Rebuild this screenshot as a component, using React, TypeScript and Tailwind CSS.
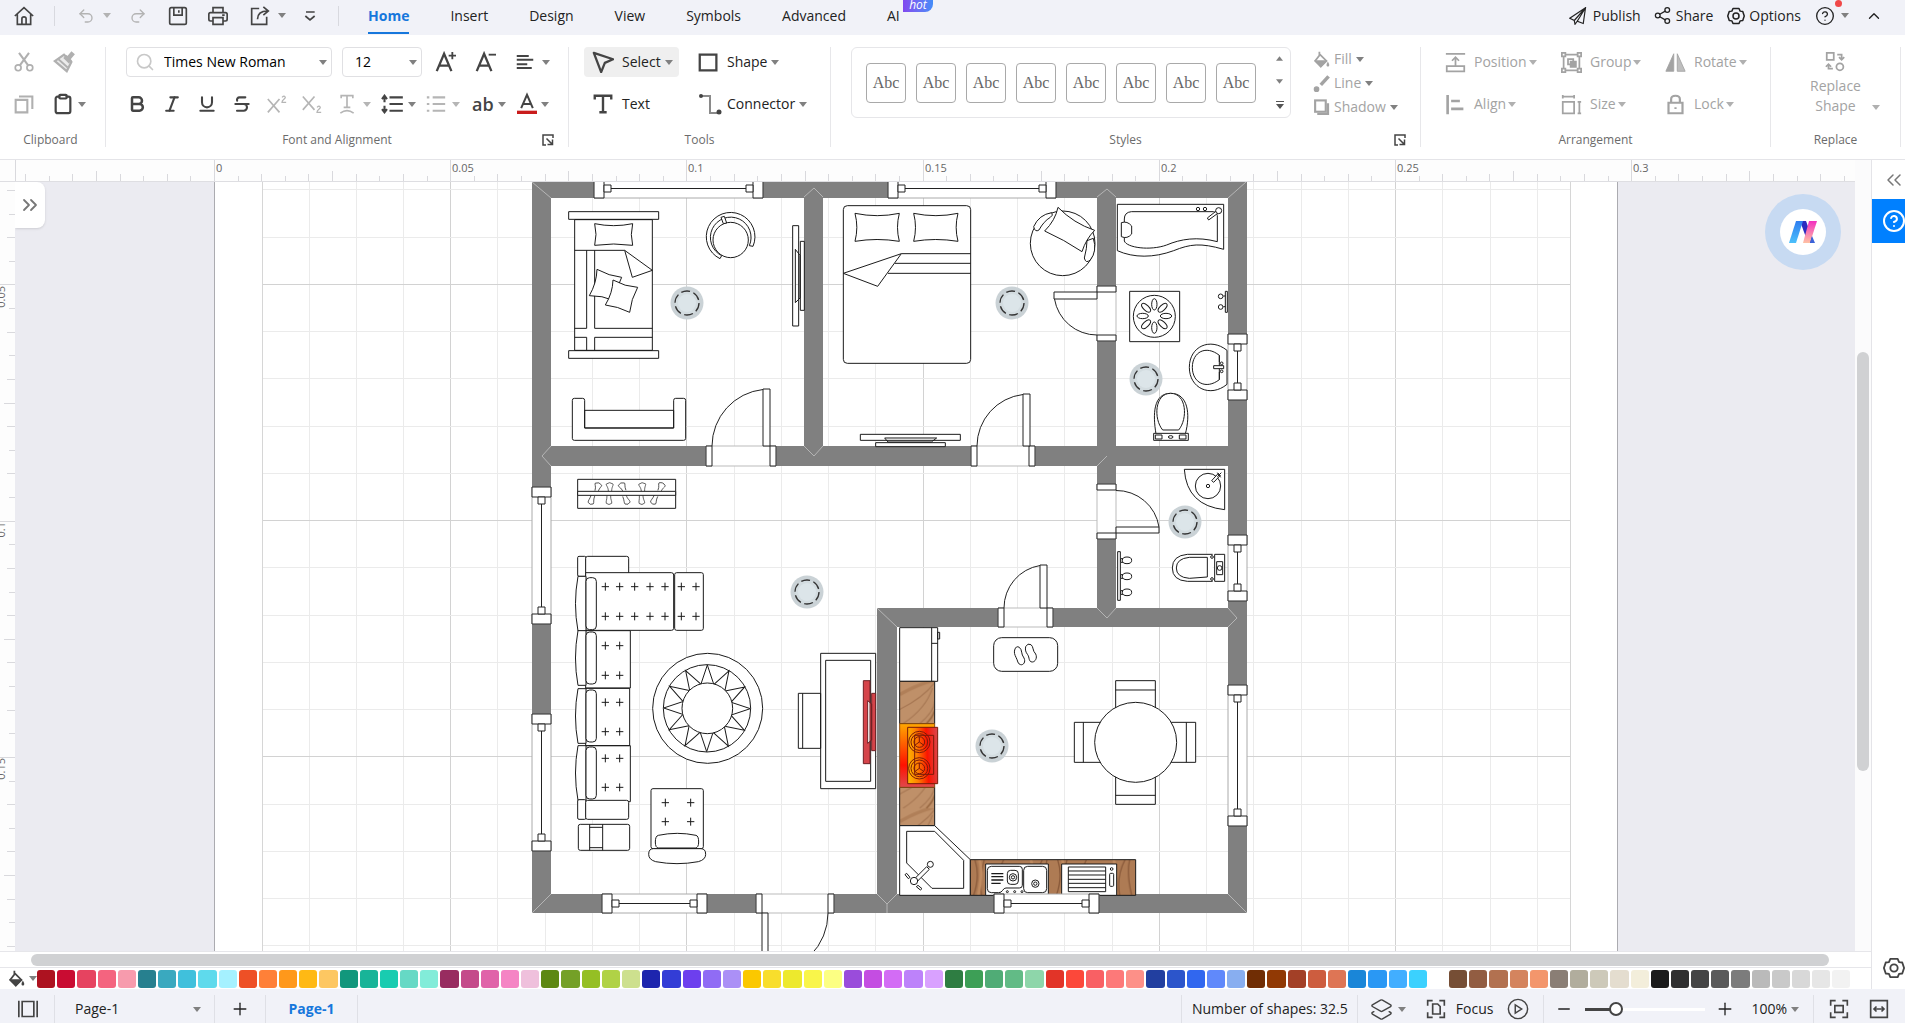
import type { ReactNode } from "react";
import {
  Bold,
  ChevronUp,
  ChevronsLeft,
  ChevronsRight,
  CircleHelp,
  Clipboard,
  Italic,
  Layers2,
  Minus,
  Plus,
  Redo2,
  Search,
  Share2,
  Strikethrough,
  Underline,
  Undo2,
} from "lucide-react";

const tabs = ["Home", "Insert", "Design", "View", "Symbols", "Advanced", "AI"];

const swatches = [
  "#ad1220", "#c90c32", "#e64360", "#f4647f", "#f79bad",
  "#27808f", "#3aa9bf", "#40c0dc", "#5fdaec", "#a5f1ff",
  "#ee5026", "#ff8038", "#ff981b", "#ffb914", "#fdc762",
  "#12977c", "#18b498", "#19ccb0", "#66d9c5", "#82ecd9",
  "#982c60", "#c44a8a", "#e063a9", "#f584c4", "#efc0dc",
  "#5d8812", "#74a027", "#95bf24", "#b0d246", "#cde08e",
  "#1d25ae", "#333dd6", "#6d3fee", "#906cf5", "#ab90f6",
  "#fbc800", "#f8de2c", "#ede92d", "#f9f54a", "#fcff83",
  "#9a4cdb", "#c44de2", "#d36cf5", "#bd82fa", "#d9a1ff",
  "#2e7d42", "#3d9f56", "#50ac76", "#62bb86", "#8ed6aa",
  "#e23428", "#fc483a", "#f96064", "#fd7979", "#fd9088",
  "#223fa0", "#2c55cb", "#3167ef", "#6089fb", "#88aef0",
  "#702d04", "#913904", "#a34027", "#cd5d3f", "#de7555",
  "#1a86d8", "#2a98f4", "#42aeff", "#3bd1fe", "#ffffff",
  "#764e35", "#925d42", "#b27150", "#d4845e", "#f3966c",
  "#8a7e75", "#b1ad9d", "#cdc9b9", "#e4ddcf", "#f3eedb",
  "#1a1a1a", "#303030", "#454545", "#5a5a5a", "#7c7c7c",
  "#bababa", "#c9c9c9", "#d8d8d8", "#e6e6e6", "#f2f2f2", "#ffffff",
];

function Caret({ className = "" }: { className?: string }) {
  return (
    <svg viewBox="0 0 8 5" className={`h-[5px] w-2 shrink-0 fill-[#808080] ${className}`}>
      <path d="M0 0h8L4 5z" />
    </svg>
  );
}

function Icon({ children, className = "size-5" }: { children: ReactNode; className?: string }) {
  return (
    <svg
      viewBox="0 0 24 24"
      fill="none"
      stroke="currentColor"
      strokeWidth="2"
      className={`shrink-0 ${className}`}
    >
      {children}
    </svg>
  );
}

const BucketIcon = ({ className = "size-5" }: { className?: string }) => (
  <Icon className={className}>
    <path d="M9 1v6M10 5l9 9-8 8-8-8z" strokeWidth="2.500" />
    <path d="M4 14h14l-7 8z" fill="currentColor" />
    <path d="M21 15c3 4 2 7 0 7s-3-3 0-7z" fill="currentColor" stroke="none" />
  </Icon>
);

const GearIcon = ({ className = "size-5" }: { className?: string }) => (
  <Icon className={className}>
    <path d="M8 2h8l1.500 3.500L21 6l2 6-2 6-3.500.500L16 22H8l-1.500-3.500L3 18l-2-6 2-6 3.500-.500z" strokeLinejoin="round" />
    <circle cx="12" cy="12" r="4" />
  </Icon>
);

const LaunchIcon = () => (
  <Icon className="size-3">
    <path d="M8 22H2V2h20v6M9 9l11 11M21 11v10H11" strokeWidth="3" />
  </Icon>
);

function Divider() {
  return <div className="my-3 w-px shrink-0 bg-[#e7e7ea]" />;
}

function Group({
  label,
  className,
  bodyClassName = "",
  launcher,
  children,
}: {
  label: string;
  className: string;
  bodyClassName?: string;
  launcher?: boolean;
  children: ReactNode;
}) {
  return (
    <section className={`flex shrink-0 flex-col pt-1.5 ${className}`}>
      <div className={`h-[84px] ${bodyClassName}`}>{children}</div>
      <div className="relative flex h-[30px] items-center justify-center text-xs text-[#6b6b6b]">
        {label}
        {launcher && (
          <button aria-label={`${label} settings`} className="absolute right-3.5 text-[#444]">
            <LaunchIcon />
          </button>
        )}
      </div>
    </section>
  );
}

function Tool({
  icon,
  label,
  caret = true,
  className = "",
}: {
  icon: ReactNode;
  label: string;
  caret?: boolean;
  className?: string;
}) {
  return (
    <button className={`flex items-center text-sm whitespace-nowrap ${className}`}>
      {icon}
      {label}
      {caret && <Caret className="ml-1" />}
    </button>
  );
}

function TopBar() {
  return (
    <header className="flex h-[35px] items-stretch bg-[#f1f2f8] text-sm text-[#222]">
      <div className="flex items-center text-[#444]">
        <button aria-label="Start page" className="flex w-12 justify-center pb-1">
          <Icon>
            <path d="M1 12 12 2l11 10M4 10v12h16V10M9.500 22v-7q0-2 2.500-2t2.500 2v7" />
          </Icon>
        </button>
        <div className="mb-1 ml-1.5 h-5 w-px bg-[#d8d9df]" />
        <button aria-label="Undo" className="mb-1 ml-[22px] flex items-center gap-2 text-[#b3b3b3]">
          <Undo2 size={18} strokeWidth={1.8} />
          <Caret className="fill-[#b3b3b3]" />
        </button>
        <button aria-label="Redo" className="mb-1 ml-[18px] text-[#b3b3b3]">
          <Redo2 size={18} strokeWidth={1.8} />
        </button>
        <button aria-label="Save" className="mb-1 ml-[21px]">
          <Icon>
            <rect x="2" y="2" width="20" height="20" rx="2" />
            <path d="M7 2v9h10V2M13 5v3" />
          </Icon>
        </button>
        <button aria-label="Print" className="mb-1 ml-5">
          <Icon>
            <path d="M6 8V2h12v6M6 18H3q-2 0-2-2v-6q0-2 2-2h18q2 0 2 2v6q0 2-2 2h-3M6 14h12v8H6zM17 11h3" />
          </Icon>
        </button>
        <button aria-label="Export" className="mb-1 ml-[22px] flex items-center gap-2">
          <Icon>
            <path d="M11 3H2v19h18v-9M9 16c0-7 4-10 12-10M16 1l6 5-6 5" />
          </Icon>
          <Caret />
        </button>
        <button aria-label="Customize toolbar" className="mb-1 ml-4">
          <Icon className="size-4">
            <path d="M6 6h13M5 12l7 6 7-6" strokeWidth="2.500" />
          </Icon>
        </button>
        <div className="mb-1 ml-5 h-5 w-px bg-[#d8d9df]" />
      </div>
      <nav className="ml-[29px] flex gap-[41px]">
        {tabs.map((tab) => (
          <button
            key={tab}
            className={
              tab === "Home"
                ? "relative pb-1 font-bold text-[#1677dc] after:absolute after:inset-x-0 after:bottom-px after:h-0.5 after:bg-[#1677dc]"
                : "relative pb-1"
            }
          >
            {tab}
            {tab === "AI" && (
              <span className="absolute top-0 left-4 h-3 w-[30px] rounded-b-lg rounded-bl-none bg-linear-to-r from-[#8048ef] to-[#418cf8] text-center text-xs leading-[10px] text-white italic">
                hot
              </span>
            )}
          </button>
        ))}
      </nav>
      <div className="ml-auto flex items-center pr-[22px] pb-1">
        <button className="flex items-center gap-1.5">
          <Icon className="size-[18px]">
            <path d="M22 1 1 15l6 3 1 5 3-4 8 3zM7 18 22 1 11 19" strokeWidth="1.600" />
          </Icon>
          Publish
        </button>
        <button className="ml-3 flex items-center gap-1">
          <Share2 size={19} strokeWidth={1.6} />
          Share
        </button>
        <button className="ml-3.5 flex items-center gap-1">
          <GearIcon className="size-[18px]" />
          Options
        </button>
        <button aria-label="Help" className="relative ml-3.5 flex items-center gap-1.5">
          <CircleHelp size={20} strokeWidth={1.6} />
          <span className="absolute -top-1.5 left-5 size-[7px] rounded-full bg-[#f04848]" />
          <Caret />
        </button>
        <button aria-label="Collapse ribbon" className="ml-4">
          <ChevronUp size={18} strokeWidth={1.8} />
        </button>
      </div>
    </header>
  );
}

function ClipboardGroup() {
  return (
    <Group label="Clipboard" className="w-[105px] pr-1">
      <div className="grid grid-cols-[48px_44px] text-[#b0b0b0]">
        <button aria-label="Cut" className="flex h-[42px] items-center justify-center">
          <Icon>
            <circle cx="5" cy="19" r="3.500" />
            <circle cx="19" cy="19" r="3.500" />
            <path d="M7 16 18 1M17 16 6 1" strokeWidth="2.500" />
          </Icon>
        </button>
        <button aria-label="Format painter" className="flex h-[42px] items-center pl-[5px]">
          <Icon className="size-[22px]">
            <path d="M2 11 12 4l8 8-5 10z" fill="currentColor" fillOpacity=".25" strokeWidth="2.500" />
            <path d="M13 6 19 12M16 9l6-7" strokeWidth="5" />
            <path d="M6 9l10 9" />
          </Icon>
        </button>
        <button aria-label="Copy" className="flex h-[42px] items-center justify-center">
          <Icon>
            <path d="M2 7h14v15H2zM6 3h16v15" strokeWidth="2.500" />
          </Icon>
        </button>
        <button aria-label="Paste" className="flex h-[42px] items-center gap-1 pl-1 text-[#444]">
          <Clipboard size={22} strokeWidth={2.4} className="shrink-0" />
          <Caret />
        </button>
      </div>
    </Group>
  );
}

function FontGroup() {
  return (
    <Group label="Font and Alignment" className="w-[462px]" bodyClassName="pl-5" launcher>
      <div className="flex h-[42px] items-center text-[#444]">
        <div className="flex h-[30px] w-[206px] items-center rounded border border-[#e0e0e3] px-2">
          <Search size={20} strokeWidth={2} className="shrink-0 text-[#c8c8c8]" />
          <select aria-label="Font" className="ml-[9px] w-full appearance-none text-sm text-black outline-none">
            <option>Times New Roman</option>
          </select>
          <Caret className="-mr-1" />
        </div>
        <div className="ml-2.5 flex h-[30px] w-20 items-center rounded border border-[#e0e0e3] pr-1 pl-3">
          <select aria-label="Font size" className="w-full appearance-none text-sm text-black outline-none">
            <option>12</option>
          </select>
          <Caret />
        </div>
        <button aria-label="Increase font size" className="ml-3">
          <Icon className="size-[22px]">
            <path d="M3 22 11 3l8 19M6 16h10" strokeWidth="2.500" />
            <path d="M16 5h8M20 1v8" />
          </Icon>
        </button>
        <button aria-label="Decrease font size" className="ml-[18px]">
          <Icon className="size-[22px]">
            <path d="M3 22 11 3l8 19M6 16h10" strokeWidth="2.500" />
            <path d="M16 4h8" />
          </Icon>
        </button>
        <button aria-label="Align text" className="ml-5 flex items-center gap-2">
          <Icon className="size-[18px]">
            <path d="M1 4h16M1 9h22M1 15h14M1 20h20" strokeWidth="2.800" />
          </Icon>
          <Caret />
        </button>
      </div>
      <div className="flex h-[42px] items-center pl-px text-[#444] [&>button]:flex [&>button]:shrink-0 [&>button]:items-center">
        <button aria-label="Bold" className="w-[35px]">
          <Bold size={20} strokeWidth={3} />
        </button>
        <button aria-label="Italic" className="w-[35px]">
          <Italic size={20} strokeWidth={2.5} />
        </button>
        <button aria-label="Underline" className="w-[35px]">
          <Underline size={20} strokeWidth={2.5} />
        </button>
        <button aria-label="Strikethrough" className="w-[35px]">
          <Strikethrough size={20} strokeWidth={2.5} />
        </button>
        <button aria-label="Superscript" className="w-[35px] text-[#b5b5b5]">
          <Icon>
            <path d="M1 6 15 22M15 6 1 22" />
            <path d="M18 4q3-3 4 0c0 2-4 3-4 6h5" strokeWidth="1.500" />
          </Icon>
        </button>
        <button aria-label="Subscript" className="w-[35px] text-[#b5b5b5]">
          <Icon>
            <path d="M1 3 15 19M15 3 1 19" />
            <path d="M18 16q3-3 4 0c0 2-4 3-4 6h5" strokeWidth="1.500" />
          </Icon>
        </button>
        <button aria-label="Text curve" className="w-[43px] gap-1.5 text-[#b5b5b5]">
          <Icon>
            <path d="M5 5V2h14v3M12 2v14M8 16h8M4 23q8-6 16 0" />
          </Icon>
          <Caret className="fill-[#b5b5b5]" />
        </button>
        <button aria-label="Line spacing" className="w-[46px] gap-1">
          <Icon className="h-5 w-6">
            <path d="M3 3v7M3 14v7M0 6l3-4 3 4M0 18l3 4 3-4M9 4h16M9 12h16M9 20h16" strokeWidth="2.500" />
          </Icon>
          <Caret />
        </button>
        <button aria-label="Bullets" className="w-[46px] gap-1.5 text-[#b5b5b5]">
          <Icon>
            <path d="M1 4h3M1 12h3M1 20h3M8 4h15M8 12h15M8 20h15" strokeWidth="2.500" />
          </Icon>
          <Caret className="fill-[#b5b5b5]" />
        </button>
        <button className="w-[45px] gap-1 text-lg leading-5 font-semibold" aria-label="Text case">
          ab
          <Caret />
        </button>
        <button aria-label="Font color" className="gap-1">
          <Icon className="h-6 w-5">
            <path d="M5 17 12 1l7 16M8 12h8" strokeWidth="2.400" />
            <path d="M0 22h24" stroke="#c91c1c" strokeWidth="4" />
          </Icon>
          <Caret />
        </button>
      </div>
    </Group>
  );
}

function ToolsGroup() {
  return (
    <Group label="Tools" className="w-[261px]" bodyClassName="pl-[15px]">
      <div className="grid grid-cols-[114px_1fr] text-[#222] [&_svg]:text-[#444]">
        <div className="flex h-[42px] items-center">
          <Tool
            label="Select"
            className="h-[30px] w-[95px] rounded bg-[#efefef] pl-2"
            icon={
              <Icon className="mr-2 size-[22px]">
                <path d="M2 2l21 7-9 4-4 10z" strokeWidth="2.500" strokeLinejoin="round" />
              </Icon>
            }
          />
        </div>
        <Tool
          label="Shape"
          className="h-[42px]"
          icon={
            <Icon className="mr-2 size-[21px]">
              <rect x="2" y="3" width="19" height="18" strokeWidth="2.600" />
            </Icon>
          }
        />
        <Tool
          label="Text"
          caret={false}
          className="h-[42px] pl-2"
          icon={
            <Icon className="mr-2 size-[22px]">
              <path d="M3 7V3h18v4M12 3v18M8 21h8" strokeWidth="2.600" />
            </Icon>
          }
        />
        <Tool
          label="Connector"
          className="h-[42px]"
          icon={
            <Icon className="mr-[5px] size-6">
              <path d="M3 4h9v17h9" stroke="#8a8a8a" />
              <circle cx="3" cy="4" r="2" fill="currentColor" stroke="none" />
              <circle cx="21" cy="20" r="2.500" fill="currentColor" stroke="none" />
            </Icon>
          }
        />
      </div>
    </Group>
  );
}

function StylesGroup() {
  return (
    <Group label="Styles" className="min-w-0 flex-1" bodyClassName="pl-5" launcher>
      <div className="flex pt-1.5">
        <div className="flex h-[71px] w-[440px] items-center gap-2.5 rounded-md border border-[#e6e6e9] pl-3.5">
          {Array.from({ length: 8 }, (_, i) => (
            <button
              key={i}
              className="h-10 w-10 shrink-0 rounded border border-[#a9a9a9] font-['Liberation_Serif',serif] text-base text-[#666]"
            >
              Abc
            </button>
          ))}
          <div className="ml-2.5 flex h-full flex-col justify-between py-2">
            <button aria-label="Previous styles">
              <Caret className="h-1 w-[7px] rotate-180 fill-[#555]" />
            </button>
            <button aria-label="Next styles">
              <Caret className="h-1 w-[7px] fill-[#555]" />
            </button>
            <button aria-label="More styles">
              <svg viewBox="0 0 8 8" className="size-2 fill-[#555]">
                <path d="M0 0h8v1H0zM0 3h8L4 8z" />
              </svg>
            </button>
          </div>
        </div>
        <div className="ml-[22px] flex flex-col text-[#a3a3a3]">
          <Tool label="Fill" className="h-6" icon={<BucketIcon className="mr-1 size-[17px]" />} />
          <Tool
            label="Line"
            className="h-6"
            icon={
              <Icon className="mr-1 size-[17px]">
                <path d="M22 2 11 14" strokeWidth="5" />
                <circle cx="5" cy="20" r="3" fill="currentColor" />
              </Icon>
            }
          />
          <Tool
            label="Shadow"
            className="h-6"
            icon={
              <Icon className="mr-1 size-[17px]">
                <rect x="3" y="2" width="15" height="16" strokeWidth="3" />
                <path d="M21 6v15H6" strokeWidth="3.500" />
              </Icon>
            }
          />
        </div>
      </div>
    </Group>
  );
}

const arrangement = [
  {
    label: "Position",
    icon: <path d="M1 2h22M12 7v8M8 10l4-4 4 4M2 16h20v6H2z" />,
  },
  {
    label: "Group",
    icon: (
      <>
        <path d="M3 3h18v18H3zM8 8h6v6H8z" />
        <path d="M11 11h6v6h-6z" fill="currentColor" />
        <path d="M1 1h4v4H1zM19 1h4v4h-4zM1 19h4v4H1zM19 19h4v4h-4z" fill="#fff" />
      </>
    ),
  },
  {
    label: "Rotate",
    icon: (
      <>
        <path d="M10 2v20H1z" fill="currentColor" strokeWidth="1" />
        <path d="M14 2v20h9z" fill="currentColor" fillOpacity=".7" strokeWidth="1" />
      </>
    ),
  },
  {
    label: "Align",
    icon: <path d="M3 1v22M7 8h10M7 17h14" strokeWidth="3" />,
  },
  {
    label: "Size",
    icon: <path d="M2 9h13v13H2zM1 3h15M2 1v4M15 1v4M21 9v13M19 9h4M19 22h4" />,
  },
  {
    label: "Lock",
    icon: <path d="M4 10h16v12H4zM7 10V6q0-4 5-4t5 4v4M12 15v2" strokeWidth="2.500" />,
  },
];

function Ribbon() {
  return (
    <div className="flex h-[125px] border-b border-[#e4e4e8] bg-white">
      <ClipboardGroup />
      <Divider />
      <FontGroup />
      <Divider />
      <ToolsGroup />
      <Divider />
      <StylesGroup />
      <Divider />
      <Group label="Arrangement" className="w-[349px]">
        <div className="grid grid-cols-[116px_104px_1fr] pl-6 text-[#a3a3a3]">
          {arrangement.map((item) => (
            <Tool
              key={item.label}
              label={item.label}
              className="h-[42px] [&>svg:last-child]:ml-0.5 [&>svg:last-child]:fill-[#b0b0b0]"
              icon={<Icon className="mr-2 size-[21px]">{item.icon}</Icon>}
            />
          ))}
        </div>
      </Group>
      <Divider />
      <Group label="Replace" className="w-[129px]">
        <button className="relative flex w-full flex-col items-center pt-2.5 text-sm leading-5 text-[#a3a3a3]">
          <Icon className="mb-1 size-[21px]">
            <path d="M2 2h8v8H2zM14 4h5v5M16 7l3 3 3-3M4 16v4h5M1 18l3-3 3 3" />
            <circle cx="17" cy="18" r="4" />
          </Icon>
          <span>Replace</span>
          <span>Shape</span>
          <Caret className="absolute right-5 bottom-1.5 fill-[#b0b0b0]" />
        </button>
      </Group>
      <Divider />
      <div className="w-1 shrink-0" />
    </div>
  );
}

const UNIT = 236.2;

function tickSize(i: number) {
  if (i % 10 === 0) return 22;
  if (i % 5 === 0) return 11;
  return i % 2 ? 6 : 8;
}

function TopRuler() {
  const ticks = Array.from({ length: 78 }, (_, i) => i - 8);
  return (
    <svg className="h-[22px] w-full border-b border-[#dedee2] bg-[#fdfdfd]">
      <g stroke="#d9d9dd">
        {ticks.map((i) => {
          const x = Math.round(215 + (i * UNIT) / 10) - 0.5;
          return <path key={i} d={`M${x} 22v-${tickSize(i)}`} />;
        })}
        <path d="M15.500 0v22" />
      </g>
      <g className="fill-[#666] text-[11px]">
        {["0", "0.05", "0.1", "0.15", "0.2", "0.25", "0.3"].map((t, i) => (
          <text key={t} x={Math.round(216 + i * UNIT)} y="12">
            {t}
          </text>
        ))}
      </g>
    </svg>
  );
}

function SideRuler() {
  const ticks = Array.from({ length: 33 }, (_, i) => i);
  return (
    <svg className="h-full w-[15px] shrink-0 bg-[#fdfdfd]">
      <g stroke="#d9d9dd">
        {ticks.map((i) => {
          const y = Math.round(9 + (i * UNIT) / 10) - 0.5;
          return <path key={i} d={`M15 ${y}h-${tickSize(i + 6)}`} />;
        })}
      </g>
      <g className="fill-[#666] text-[11px]">
        {["0.05", "0.1", "0.15"].map((t, i) => (
          <text
            key={t}
            textAnchor="end"
            transform={`translate(5 ${Math.round(104 + i * UNIT)}) rotate(-90)`}
          >
            {t}
          </text>
        ))}
      </g>
    </svg>
  );
}

// a window frame, laid along x and turned a quarter for the side walls
function WindowFrame({ x, y, length, upright }: { x: number; y: number; length: number; upright?: boolean }) {
  return (
    <g
      transform={`translate(${x} ${y})${upright ? " rotate(90) scale(1 -1)" : ""}`}
      fill="#fff"
      stroke="#222"
    >
      <path d={`M0 0h${length}v19H0z`} stroke="#aaa" />
      <path d={`M0 0h10v19H0zM${length - 10} 0h10v19h-10z`} />
      <path d={`M10 6h7v7h-7zM${length - 17} 6h7v7h-7zM17 9.500H${length - 17}`} />
    </g>
  );
}

function Door({ opening, jambs, leaf, arc }: { opening: string; jambs: string; leaf: string; arc: string }) {
  return (
    <g fill="#fff" stroke="#222">
      <path d={opening} stroke="#bbb" />
      <path d={jambs} />
      <path d={arc} fill="none" />
      <path d={leaf} />
    </g>
  );
}

const lamps = [
  [687, 303],
  [1012, 303],
  [1146, 379],
  [1185, 522],
  [807, 592],
  [992, 746],
];

function Grid() {
  const columns = Array.from({ length: 28 }, (_, i) => i);
  const rows = Array.from({ length: 17 }, (_, i) => i);
  return (
    <g>
      {columns.map((i) => {
        const x = Math.floor(309 + i * 47.24) + 0.5;
        return x < 1570 && <path key={i} d={`M${x} 182V951`} stroke={i % 5 === 3 ? "#d2d2d2" : "#ebebeb"} />;
      })}
      {rows.map((i) => (
        <path
          key={i}
          d={`M262 ${Math.round(190.4 + i * 47.24) - 0.5}H1570`}
          stroke={i % 5 === 2 ? "#d2d2d2" : "#ebebeb"}
        />
      ))}
      <path d="M262.500 182V951M1570.500 182V951" stroke="#d6d6d6" />
    </g>
  );
}

function Walls() {
  return (
    <>
      <g fill="#808080">
        <path d="M532 182H1247V913H532zM551 198V446H804V198zM823 198V446H1097V198zM1116 198V446H1228V198zM551 466V894H877V608H1097V466zM1116 466V608H1228V466zM897 627V894H1228V627z" fillRule="evenodd" />
      </g>
      <path
        d="M532 182l19 16M804 197l10-9 9 9M1097 197l10-8 9 8M1246 182l-18 16M551 446l-9 10 9 10M804 446l10 10 9-10M1097 466l10-10M877 608l20 19M1097 608l10 10 9-10M1228 608l9 10-9 9M532 913l19-19M877 894l10 10 10-10M887 904v9M1228 894l19 19"
        fill="none"
        stroke="#b5b5b5"
      />
      <WindowFrame x={594} y={179} length={169} />
      <WindowFrame x={888} y={179} length={168} />
      <WindowFrame x={602} y={894} length={105} />
      <WindowFrame x={532} y={487} length={137} upright />
      <WindowFrame x={532} y={714} length={137} upright />
      <WindowFrame x={1228} y={334} length={66} upright />
      <WindowFrame x={1228} y={535} length={66} upright />
      <WindowFrame x={1228} y={685} length={141} upright />
      <Door
        opening="M706 446h70v20h-70z"
        jambs="M706 446h6v20h-6zM770 446h6v20h-6z"
        leaf="M763 389h7v57h-7z"
        arc="M763 389.500A57 57 0 0 0 712 446"
      />
      <Door
        opening="M971 446h64v20h-64z"
        jambs="M971 446h6v20h-6zM1029 446h6v20h-6z"
        leaf="M1023 394h7v52h-7z"
        arc="M1023 394.500A52 52 0 0 0 977 446"
      />
      <Door
        opening="M998 608h55v19h-55z"
        jambs="M998 608h6v19h-6zM1047 608h6v19h-6z"
        leaf="M1040 565h7v43h-7z"
        arc="M1040 565.500A43 43 0 0 0 1004 608"
      />
      <Door
        opening="M1097 286h19v55h-19z"
        jambs="M1097 286h19v6h-19zM1097 335h19v6h-19z"
        leaf="M1054 292h43v7h-43z"
        arc="M1054.500 299A43 43 0 0 0 1097 335"
      />
      <Door
        opening="M1097 484h19v55h-19z"
        jambs="M1097 484h19v6h-19zM1097 533h19v6h-19z"
        leaf="M1116 527h43v6h-43z"
        arc="M1159 527A43 43 0 0 0 1116 490.500"
      />
      <Door
        opening="M756 894h78v19h-78z"
        jambs="M756 894h6v19h-6zM828 894h6v19h-6z"
        leaf="M762 913h6v50h-6z"
        arc="M828 913A60 60 0 0 1 768 973"
      />
    </>
  );
}

// furniture groups below are drawn at three units per pixel

function BedroomLeft() {
  return (
    <g transform="translate(525 170) scale(.333333)" fill="#fff" stroke="#1a1a1a" strokeWidth="3">
      <path d="M149 149h233v392H149zM131 125h270v23H131zM131 542h270v23H131z" />
      <path d="M149 241h150l83 60-60 21-23-81M185 241v234h-36M209 241v234h173M149 502h36v39M209 541v-39h173" fill="none" />
      <path d="M209 161q57 12 114 0-8 33 0 65-57-8-114 0 8-33 0-65z" />
      <path d="M216 298q36 20 74 24-18 34-22 70-37-16-75-15 22-38 23-79z" />
      <path d="M264 330q36 20 74 22-20 36-24 75-36-18-73-22 22-36 23-75z" />
      <path d="M585 266a73 73 0 1 1 99-37l-11-2a61 61 0 1 0-83 30z" />
      <circle cx="617" cy="210" r="53" />
      <path d="M588 142l10-3 7 20-10 2z" />
      <path d="M803 167h18v301h-18zM826 214h12v207h-12zM811 238v160l14-14V256z" />
      <path d="M142 691q0-6 6-6h25q6 0 6 6v83h267v-83q0-6 6-6h24q6 0 6 6v114q0 6-6 6H148q-6 0-6-6zM179 721h267v53H179z" />
    </g>
  );
}

function BedroomRight() {
  return (
    <g transform="translate(800 170) scale(.333333)" fill="#fff" stroke="#1a1a1a" strokeWidth="3">
      <rect x="130" y="107" width="382" height="473" rx="12" />
      <path d="M165 130q67 14 133 0-11 42 0 84-67-11-133 0 11-42 0-84zM341 130q67 14 133 0-11 42 0 84-67-11-133 0 11-42 0-84z" />
      <path d="M304 251h208M284 280h228M264 310h248" fill="none" />
      <path d="M130 310l174-59-71 98z" />
      <circle cx="788" cy="220" r="97" />
      <path d="M701 170q16-36 54-42 6 8-4 14-20 12-34 38-12 8-16-10zM880 205q12 38-9 65-14 12-18-6 8-30 8-52z" />
      <path d="M774 112q47 48 110 69-26 26-38 64-54-36-112-62 32-32 40-71z" />
      <path d="M181 793h300v18H181zM227 818h209v12H227zM254 804h156l-16 12H264z" />
    </g>
  );
}

function Bathroom() {
  return (
    <g transform="translate(800 170) scale(.333333)" fill="#fff" stroke="#1a1a1a" strokeWidth="3">
      <path d="M952 103h319v135c-70-20-100-16-150 4-60 22-120 22-169 0z" />
      <path d="M994 125h246q12 0 12 12v78c-60-16-110-8-152 10-50 18-120 8-127-12v-66q0-20 21-22z" />
      <path d="M964 158q18-6 31 10v24q-13 16-31 8z" />
      <circle cx="1194" cy="117" r="5" />
      <circle cx="1215" cy="117" r="5" />
      <path d="M1222 144l28-22 6 6-30 22z" />
      <circle cx="1256" cy="122" r="9" />
      <path d="M989 364h150v151H989z" />
      <circle cx="1063" cy="439" r="63" />
      {[0, 45, 90, 135, 180, 225, 270, 315].map((angle) => (
        <ellipse key={angle} cx="1063" cy="403" rx="8" ry="17" transform={`rotate(${angle} 1063 438)`} />
      ))}
      <path d="M1276 364h6v63h-6zM1270 378h6M1270 410h6" />
      <circle cx="1262" cy="379" r="7" />
      <circle cx="1262" cy="411" r="7" />
      <path d="M1281 541c-50-40-113-12-113 51s63 92 113 51z" />
      <path d="M1258 556c-40-32-81-10-81 36s41 68 81 37z" />
      <path d="M1241 587h30v9h-30zM1258 556v20M1258 606v23" />
      <circle cx="1265" cy="580" r="4" />
      <circle cx="1265" cy="604" r="4" />
      <path d="M1068 792c-10-60-8-122 44-122s60 62 44 122z" />
      <path d="M1088 780c-28-34-24-110 24-110s52 76 24 110z" />
      <path d="M1061 790h104v21h-104zM1066 795h20v12h-20zM1138 795h20v12h-20z" />
      <ellipse cx="1112" cy="801" rx="7" ry="4" />
    </g>
  );
}

function Plus4({ x, y }: { x: number; y: number }) {
  return <path d={`M${x - 11} ${y}h22M${x} ${y - 12}v24`} />;
}

function LivingRoom() {
  const rays = Array.from({ length: 12 }, (_, i) => i * 30);
  const shoes = [218, 254, 292, 352, 408];
  const soles = [200, 252, 304, 350, 388];
  const tilts = [18, 0, -22, -4, 24];
  return (
    <g transform="translate(525 460) scale(.333333)" fill="#fff" stroke="#1a1a1a" strokeWidth="3">
      <path d="M158 58h294v87H158z" />
      {shoes.map((x, i) => (
        <path
          key={x}
          d="M-4 14C-4 0-12-4-10-8q10-8 20 0C12-4 6 0 6 14"
          strokeWidth="2"
          transform={`translate(${x} 80) rotate(${tilts[i]})`}
        />
      ))}
      {soles.map((x, i) => (
        <path
          key={x}
          d="M-6-14C-6 0-10 4-8 10q8 7 16 0C10 4 4 0 5-14"
          strokeWidth="2"
          transform={`translate(${x} 120) rotate(${tilts[i]})`}
        />
      ))}
      <path d="M158 94h294v12H158z" />

      <rect x="158" y="289" width="25" height="60" rx="4" />
      <rect x="182" y="289" width="129" height="58" rx="6" />
      <path d="M182 338h257q7 0 7 7v160q0 6-7 6H182zM449 344q0-6 6-6h74q6 0 6 6v161q0 6-6 6h-74q-6 0-6-6z" />
      <path d="M182 512h134v172H182zM182 685h132v172H182zM182 857h134v168H182z" />
      {[349, 512, 686, 857].map((y) => (
        <g key={y}>
          <path d={`M159 ${y}h24v164h-24q-15-82 0-164z`} />
          <rect x="183" y={y + 4} width="31" height="156" rx="11" />
        </g>
      ))}
      <rect x="158" y="1019" width="25" height="59" rx="4" />
      <rect x="182" y="1021" width="129" height="57" rx="6" />
      {[241, 284, 329, 375, 420, 469, 513].map((x) => (
        <g key={x}>
          <Plus4 x={x} y={380} />
          <Plus4 x={x} y={469} />
        </g>
      ))}
      {[557, 646, 727, 815, 895, 982].map((y) => (
        <g key={y}>
          <Plus4 x={241} y={y} />
          <Plus4 x={284} y={y} />
        </g>
      ))}
      <rect x="160" y="1093" width="154" height="78" rx="6" />
      <path d="M194 1093v78M233 1093v78M194 1102h39M194 1163h39" />

      <circle cx="548" cy="745" r="165" />
      <circle cx="546" cy="745" r="131" />
      {rays.map((angle) => (
        <path key={angle} d="M528 672L547 615 566 672" transform={`rotate(${angle} 546 745)`} />
      ))}
      <circle cx="547" cy="745" r="76" />

      <rect x="378" y="986" width="157" height="180" rx="6" />
      <path d="M371 1183q0-17 14-17h143q14 0 14 17 0 16-22 22-64 12-128 0-21-6-21-22z" />
      <path d="M400 1126q57-12 113 0 8 2 8 20 0 17-10 18H401q-10 0-10-18 0-18 9-20z" />
      <Plus4 x={421} y={1028} />
      <Plus4 x={497} y={1028} />
      <Plus4 x={421} y={1085} />
      <Plus4 x={497} y={1085} />

      <path d="M820 700h67v165h-67zM833 700v165M887 580h165v406H887zM902 601h135v363H902z" />
      <path d="M1015 662h20v249h-20zM1040 700h12v172h-12zM1028 722v128l12-10V732z" fill="#d5444a" stroke="#6d2024" />
    </g>
  );
}

function WashRoom() {
  return (
    <g transform="translate(860 460) scale(.333333)" fill="#fff" stroke="#1a1a1a" strokeWidth="3">
      <path d="M973 28h121v121q-114-12-121-121z" />
      <circle cx="1044" cy="78" r="38" />
      <circle cx="1044" cy="78" r="5" />
      <path d="M1055 62l20-22 6 6-20 21zM1072 38l10 14M1084 38l-12 12" />
      <path d="M1064 283h30v81h-30zM1058 283h-76q-45 4-45 41t45 40h76M1042 292h-54q-39 4-39 32t39 31l54-4z" />
      <path d="M1070 305h18v39h-18z" />
      <circle cx="1079" cy="324" r="7" />
      <circle cx="1056" cy="291" r="4" />
      <circle cx="1056" cy="357" r="4" />
      <path d="M773 275h8v146h-8z" />
      {[301, 349, 397].map((y) => (
        <g key={y}>
          <path d={`M782 ${y - 5}h8v11h-8z`} />
          <ellipse cx="801" cy={y} rx="14" ry="10" />
        </g>
      ))}
    </g>
  );
}

function Burner({ y }: { y: number }) {
  return (
    <g fill="none" stroke="#7a1b08">
      <circle cx="178" cy={y} r="32" />
      <circle cx="178" cy={y} r="25" />
      <circle cx="178" cy={y} r="16" />
      <path d={`M178 ${y}v-16M178 ${y}l-14 10M178 ${y}l14 10`} />
    </g>
  );
}

function Kitchen() {
  return (
    <g transform="translate(860 460) scale(.333333)" fill="#fff" stroke="#1a1a1a" strokeWidth="3">
      <rect x="401" y="533" width="192" height="101" rx="24" />
      <path d="M464 570q4-14 14-8c10 8 4 20 14 32 6 12-2 22-10 20-10-2-8-12-14-22-4-8-6-14-4-22zM497 560q6-12 16-6c8 6 4 18 14 28 6 12-2 24-10 24-12 0-8-14-14-22-6-8-8-14-6-24z" />
      <path d="M119 503h114v161H119zM215 503v161M215 550h18M233 517h6v20h-6z" />
      <path d="M119 664h105v127H119zM119 982h105v115H119z" fill="url(#wood)" />
      <path d="M119 791h105v191H119z" fill="url(#heat)" stroke="#8a4a10" />
      <path d="M143 802h90v169h-90z" fill="url(#heatAcross)" stroke="#7a1b08" />
      <path d="M164 826h57v117h-57z" fill="none" stroke="#7a1b08" />
      <Burner y={846} />
      <Burner y={925} />
      <path d="M119 1097h105l107 102v107H119z" />
      <path d="M140 1114h84l87 87v84h-95l-76-76z" />
      <path d="M166 1254l34-34 8 8-34 34z" />
      <circle cx="211" cy="1213" r="9" />
      <circle cx="162" cy="1263" r="11" />
      <path d="M135 1244l5-4 10 12-5 4zM169 1280l5-4 12 10-5 4z" />
      <path d="M331 1199h496v107H331z" fill="url(#woodAcross)" />
      <path d="M377 1212h188v94H377zM605 1212h165v94H605z" />
      <path d="M394 1219h84q9 0 9 9v48q0 8-9 8h-40q-6 0-10 7-4 7-12 7h-22q-12 0-12-12v-55q0-12 12-12z" />
      <rect x="491" y="1219" width="69" height="79" rx="12" />
      <rect x="442" y="1231" width="33" height="42" rx="10" />
      <path d="M394 1241h36M394 1250h36M394 1260h36M394 1270h28" strokeWidth="4" />
      <circle cx="459" cy="1252" r="11" />
      <circle cx="459" cy="1252" r="5" />
      <circle cx="526" cy="1271" r="11" />
      <circle cx="526" cy="1271" r="5" />
      <circle cx="442" cy="1295" r="3" />
      <circle cx="464" cy="1295" r="3" />
      <circle cx="486" cy="1295" r="3" />
      <path d="M625 1221h112v74H625zM625 1233h112M625 1245h112M625 1258h112M625 1270h112M625 1283h112" />
      <circle cx="755" cy="1227" r="4" />
      <rect x="749" y="1240" width="12" height="39" rx="3" />

      <path d="M767 662h119v120H767zM767 690h119M767 910h119v123H767zM767 1006h119M643 787h120v120H643zM670 787v120M890 787h117v120H890zM979 787v120" />
      <ellipse cx="827" cy="847" rx="123" ry="120" />
    </g>
  );
}

function FloorPlan() {
  return (
    <svg
      viewBox="15 182 1840 769"
      preserveAspectRatio="xMinYMin slice"
      className="absolute inset-0 h-full w-full"
      role="img"
      aria-label="Apartment floor plan"
    >
      <defs>
        <pattern id="wood" width="105" height="127" patternUnits="userSpaceOnUse" x="119" y="664">
          <path d="M0 0h105v127H0z" fill="#bf9069" stroke="none" />
          <g fill="none" stroke="#a47450" strokeWidth="3">
            <path d="M0 40Q50 10 105-4" stroke="#b07f58" strokeWidth="10" />
            <path d="M0 84Q70 50 105 4M10 127Q80 80 98 20M60 127Q104 90 105 60" />
            <path d="M80 127q20-20 25-40" stroke="#96663f" strokeWidth="5" />
          </g>
        </pattern>
        <pattern id="woodAcross" width="248" height="107" patternUnits="userSpaceOnUse" x="331" y="1199">
          <path d="M0 0h248v107H0z" fill="#ae7b54" stroke="none" />
          <g fill="none" stroke="#8a5a3a" strokeWidth="4">
            <path d="M10 107Q30 50 14 0M34 107Q26 60 42 0M90 107Q80 40 100 0M200 107Q190 50 216 0M236 107Q220 40 230 0" />
            <path d="M24 107Q38 40 28 0M180 107Q196 50 182 0" stroke="#c08b60" strokeWidth="8" />
          </g>
        </pattern>
        <linearGradient id="heat" x1="0" y1="0" x2="0" y2="1">
          <stop offset="0" stopColor="#ffa800" />
          <stop offset=".65" stopColor="#ff1200" />
          <stop offset="1" stopColor="#e0484c" />
        </linearGradient>
        <linearGradient id="heatAcross" x1="0" y1=".5" x2="1" y2=".4">
          <stop offset="0" stopColor="#ffb400" />
          <stop offset=".3" stopColor="#ff8000" />
          <stop offset=".65" stopColor="#fb1500" />
          <stop offset="1" stopColor="#dc4448" />
        </linearGradient>
      </defs>
      <path d="M215 182H1617V951H215z" fill="#fff" />
      <path d="M214.500 182V951M1617.500 182V951" stroke="#ababb0" />
      <Grid />
      <Walls />
      <BedroomLeft />
      <BedroomRight />
      <Bathroom />
      <LivingRoom />
      <WashRoom />
      <Kitchen />
      <WindowFrame x={994} y={894} length={105} />
      {lamps.map(([x, y]) => (
        <g key={`${x}-${y}`}>
          <circle cx={x} cy={y} r="16.500" fill="#cad2d6" />
          <circle cx={x} cy={y} r="12" fill="#d3dce0" stroke="#333" strokeWidth="1.300" strokeDasharray="9 3.570" />
          <circle cx={x} cy={y} r="9" fill="#dce5e9" />
        </g>
      ))}
    </svg>
  );
}

function AssistantButton() {
  return (
    <button
      aria-label="AI assistant"
      className="absolute top-3 right-3.5 flex size-[76px] items-center justify-center rounded-full bg-[#c7daf2]"
    >
      <span className="flex size-[46px] items-center justify-center rounded-full bg-white">
        <svg viewBox="0 0 30 22" className="h-[22px] w-[30px]">
          <defs>
            <linearGradient id="pink" x1="0" y1="0" x2="0" y2="1">
              <stop offset="0" stopColor="#f22fc0" />
              <stop offset="1" stopColor="#ffc2a4" />
            </linearGradient>
            <linearGradient id="sky" x1="0" y1="0" x2="0" y2="1">
              <stop offset="0" stopColor="#2f7df0" />
              <stop offset="1" stopColor="#4cc0fb" />
            </linearGradient>
          </defs>
          <path d="M12 0h6l8 22h-6z" fill="#2b2cc0" />
          <path d="M8 0h7L8 22H1z" fill="url(#sky)" />
          <path d="M21 0h8l-7 22h-7z" fill="url(#pink)" />
          <path d="M22 22l2-7 3 7z" fill="#3a63d8" />
        </svg>
      </span>
    </button>
  );
}

function SidePanel() {
  return (
    <aside className="flex w-[34px] shrink-0 flex-col overflow-hidden border-l border-[#e4e4e8] bg-white">
      <button aria-label="Expand panel" className="flex h-[39px] w-[44px] items-center justify-center text-[#777]">
        <ChevronsLeft size={24} strokeWidth={1.5} />
      </button>
      <button aria-label="Help center" className="flex h-11 w-[44px] items-center justify-center bg-[#0080ff] text-white">
        <CircleHelp size={24} strokeWidth={2} />
      </button>
      <button aria-label="Panel settings" className="mt-auto mb-2.5 flex w-[43px] justify-center text-[#444]">
        <GearIcon className="size-[22px]" />
      </button>
    </aside>
  );
}

function StatusBar() {
  return (
    <footer className="flex h-[34px] items-center bg-[#f1f2f8] pt-1.5 text-sm text-[#222]">
      <button aria-label="Page view" className="ml-[17px] text-[#444]">
        <Icon className="h-5 w-[22px]">
          <path d="M1 2v20M23 2v20M5 3h14v18H5z" />
        </Icon>
      </button>
      <div className="ml-[15px] h-full w-px bg-[#dfe0e6]" />
      <select aria-label="Page" className="ml-5 w-[118px] appearance-none outline-none">
        <option>Page-1</option>
      </select>
      <Caret />
      <div className="ml-[13px] h-full w-px bg-[#dfe0e6]" />
      <button aria-label="Add page" className="flex w-[50px] justify-center">
        <Plus size={20} strokeWidth={1.6} />
      </button>
      <div className="h-full w-px bg-[#dfe0e6]" />
      <button className="w-[91px] text-center font-bold text-[#1677dc]">Page-1</button>
      <div className="h-full w-px bg-[#dfe0e6]" />

      <div className="ml-auto h-full w-px bg-[#dfe0e6]" />
      <span className="pr-[9px] pl-2.5">Number of shapes: 32.5</span>
      <div className="h-full w-px bg-[#dfe0e6]" />
      <button aria-label="Layers" className="ml-3 flex items-center gap-[5px] text-[#444]">
        <Layers2 size={23} strokeWidth={1.5} />
        <Caret />
      </button>
      <button className="ml-5 flex items-center gap-2.5">
        <Icon className="size-5 text-[#444]">
          <path d="M8 2H2v6M2 16v6h6M16 2h6v6M22 16v6h-6M8 6h6l3 3v9H8z" />
        </Icon>
        Focus
      </button>
      <button aria-label="Present" className="ml-3.5 text-[#444]">
        <Icon className="size-[22px]">
          <circle cx="12" cy="12" r="10.500" strokeWidth="1.600" />
          <path d="M9 7.500 16 12l-7 4.500z" strokeWidth="1.600" />
        </Icon>
      </button>
      <div className="ml-3.5 h-full w-px bg-[#dfe0e6]" />
      <button aria-label="Zoom out" className="ml-[11px]">
        <Minus size={18} strokeWidth={1.8} />
      </button>
      <input
        type="range"
        aria-label="Zoom"
        defaultValue={22}
        className="ml-3 h-[3px] w-[120px] appearance-none bg-linear-to-r from-[#444] from-25% to-white to-25% [&::-webkit-slider-thumb]:size-3.5 [&::-webkit-slider-thumb]:appearance-none [&::-webkit-slider-thumb]:rounded-full [&::-webkit-slider-thumb]:border-2 [&::-webkit-slider-thumb]:border-[#444] [&::-webkit-slider-thumb]:bg-white"
      />
      <button aria-label="Zoom in" className="ml-2.5">
        <Plus size={20} strokeWidth={1.6} />
      </button>
      <button className="ml-4 flex items-center gap-1">
        100%
        <Caret />
      </button>
      <div className="ml-3.5 h-full w-px bg-[#dfe0e6]" />
      <button aria-label="Fit page" className="ml-[15px] text-[#444]">
        <Icon>
          <path d="M8 2H2v6M2 16v6h6M16 2h6v6M22 16v6h-6M7 8h10v8H7z" />
        </Icon>
      </button>
      <button aria-label="Fit width" className="mr-4 ml-5 text-[#444]">
        <Icon>
          <path d="M2 2h20v20H2zM6 12h12M9 9l-3 3 3 3M15 9l3 3-3 3" />
        </Icon>
      </button>
    </footer>
  );
}

export default function App() {
  return (
    <div className="flex h-screen flex-col overflow-hidden bg-white font-['Open_Sans',sans-serif] text-[#222]">
      <TopBar />
      <Ribbon />
      <div className="flex min-h-0 flex-1">
        <div className="flex min-w-0 flex-1 flex-col">
          <div className="flex min-h-0 flex-1">
            <div className="flex min-w-0 flex-1 flex-col">
              <div className="h-[22px]">
                <TopRuler />
              </div>
              <div className="flex min-h-0 flex-1">
                <SideRuler />
                <main className="relative min-w-0 flex-1 overflow-hidden bg-[#ebebf1]">
                  <FloorPlan />
                  <button
                    aria-label="Open symbol library"
                    className="absolute top-0 left-0 flex h-[46px] w-[30px] items-center justify-center rounded-r-lg bg-white text-[#777] shadow-sm"
                  >
                    <ChevronsRight size={24} strokeWidth={1.8} />
                  </button>
                  <AssistantButton />
                </main>
              </div>
            </div>
            <div className="flex w-4 flex-col bg-[#fbfbfc] px-0.5 pt-[192px]">
              <div className="h-[70%] rounded-full bg-[#d0d1d3]" />
            </div>
          </div>
          <div className="flex h-[17px] border-y border-[#e6e6ea] pt-0.5 pr-[42px] pb-px pl-[31px]">
            <div className="flex-1 rounded-full bg-[#d0d1d3]" />
          </div>
          <div className="flex h-[21px] items-center">
            <button aria-label="Fill color" className="flex w-[37px] items-center gap-1 pl-2 text-[#444]">
              <BucketIcon className="size-[17px]" />
              <Caret className="w-1.5" />
            </button>
            <div className="flex h-[18px] flex-1 gap-0.5">
              {swatches.map((color, i) => (
                <button
                  key={i}
                  aria-label={color}
                  className="flex-1 rounded-[3px]"
                  style={{ backgroundColor: color }}
                />
              ))}
            </div>
          </div>
        </div>
        <SidePanel />
      </div>
      <StatusBar />
    </div>
  );
}
